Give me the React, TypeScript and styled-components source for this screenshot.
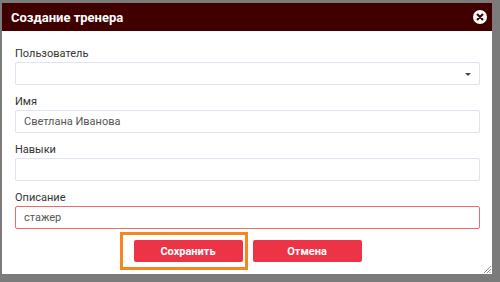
import styled, { createGlobalStyle } from "styled-components";

const GlobalStyle = createGlobalStyle`
  html, body {
    margin: 0;
    padding: 0;
    background: #7b7b7b;
    font-family: Roboto, "Liberation Sans", Arial, sans-serif;
  }
`;

const Screen = styled.div`
  width: 500px;
  height: 282px;
  padding: 3px 0 0 2px;
  box-sizing: border-box;
  overflow: hidden;
`;

const Dialog = styled.div`
  position: relative;
  width: 490px;
  height: 271px;
  background: #ffffff;
  display: flex;
  flex-direction: column;
`;

const Header = styled.div`
  height: 28px;
  background: #400000;
  display: flex;
  align-items: center;
  justify-content: space-between;
  padding: 0 5px 0 9px;
  color: #ffffff;
  font-size: 13px;
  font-weight: 700;
`;

const CloseButton = styled.div`
  width: 14px;
  height: 14px;
  border-radius: 50%;
  background: #ffffff;
  display: flex;
  align-items: center;
  justify-content: center;
`;

const Body = styled.div`
  padding: 16px 12px 0 13px;
  display: flex;
  flex-direction: column;
`;

const Field = styled.div`
  display: flex;
  flex-direction: column;
  gap: 1px;
  margin-bottom: 10px;
`;

const Label = styled.div`
  font-size: 11px;
  line-height: 14px;
  color: #333333;
`;

const Input = styled.div<{ $error?: boolean }>`
  position: relative;
  height: 23px;
  box-sizing: border-box;
  border: 1px solid ${(p) => (p.$error ? "#ee6b6b" : "#dde3ef")};
  border-radius: 2px;
  padding: 0 8px;
  display: flex;
  align-items: center;
  font-size: 11px;
  color: #555555;
`;

const Caret = styled.div`
  position: absolute;
  right: 8px;
  top: 10px;
  width: 0;
  height: 0;
  border-left: 3px solid transparent;
  border-right: 3px solid transparent;
  border-top: 3px solid #444444;
`;

const Actions = styled.div`
  display: flex;
  justify-content: center;
  gap: 10px;
  margin-top: 1px;
`;

const ButtonWrap = styled.div`
  position: relative;
`;

const Button = styled.div`
  width: 109px;
  height: 22px;
  background: #ec3446;
  border-radius: 2px;
  color: #ffffff;
  font-size: 11px;
  font-weight: 700;
  display: flex;
  align-items: center;
  justify-content: center;
`;

const Highlight = styled.div`
  position: absolute;
  left: -14px;
  top: -8px;
  right: -5px;
  bottom: -8px;
  border: 3px solid #f7861f;
`;

const Grip = styled.svg`
  position: absolute;
  right: 1px;
  bottom: 1px;
`;

export default function App() {
  return (
    <Screen>
      <GlobalStyle />
      <Dialog>
        <Header>
          <span>Создание тренера</span>
          <CloseButton>
            <svg width="8" height="8" viewBox="0 0 8 8">
              <path d="M1.5 1.5L6.5 6.5M6.5 1.5L1.5 6.5" stroke="#400000" strokeWidth="2" strokeLinecap="round" />
            </svg>
          </CloseButton>
        </Header>
        <Body>
          <Field>
            <Label>Пользователь</Label>
            <Input>
              <Caret />
            </Input>
          </Field>
          <Field>
            <Label>Имя</Label>
            <Input>Светлана Иванова</Input>
          </Field>
          <Field>
            <Label>Навыки</Label>
            <Input />
          </Field>
          <Field>
            <Label>Описание</Label>
            <Input $error>стажер</Input>
          </Field>
          <Actions>
            <ButtonWrap>
              <Button>Сохранить</Button>
              <Highlight />
            </ButtonWrap>
            <ButtonWrap>
              <Button>Отмена</Button>
            </ButtonWrap>
          </Actions>
        </Body>
        <Grip width="7" height="7" viewBox="0 0 7 7">
          <path d="M7 0L0 7M7 3L3 7M7 5.5L5.5 7" stroke="#8a8a8a" strokeWidth="1" />
        </Grip>
      </Dialog>
    </Screen>
  );
}
